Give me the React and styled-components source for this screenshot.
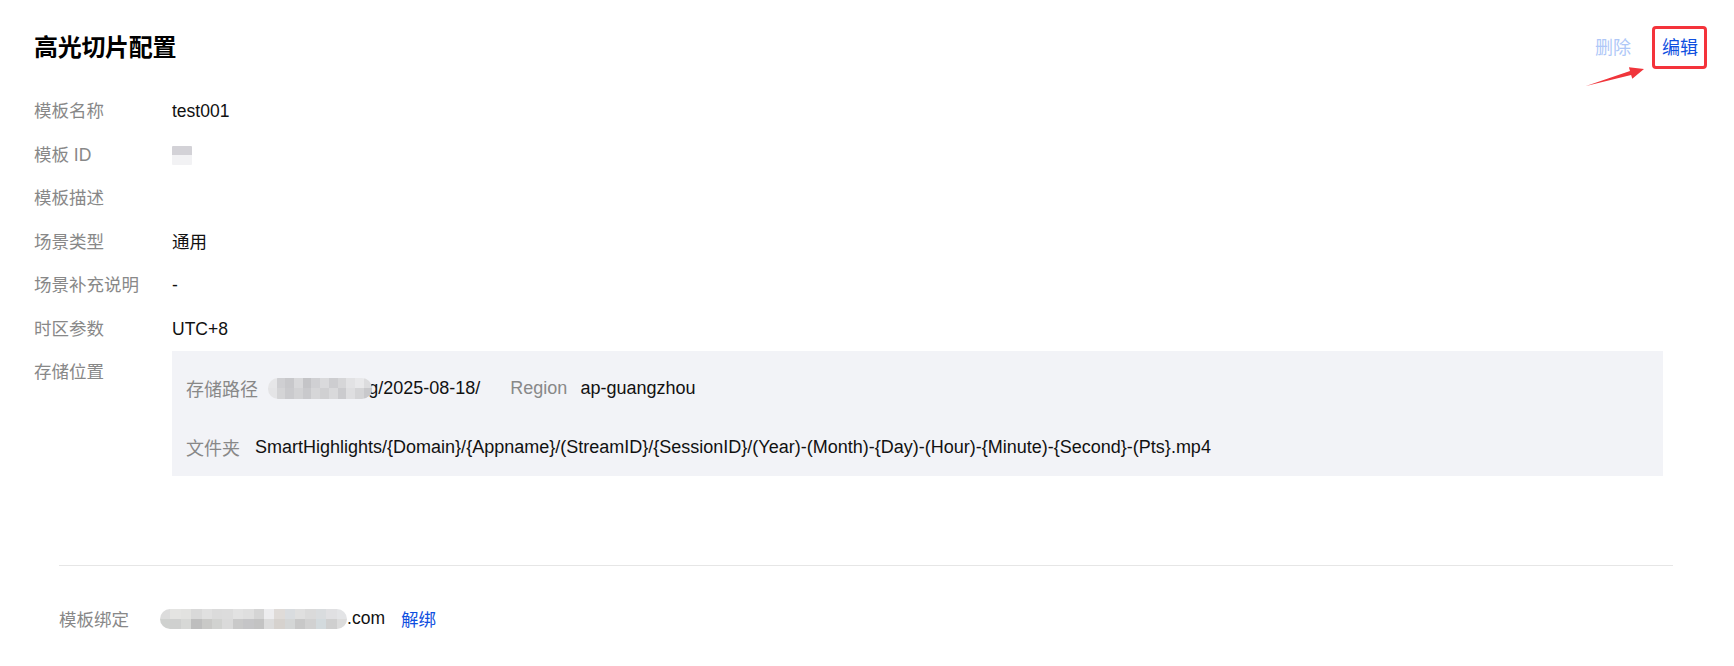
import React from "react";
import styled, { createGlobalStyle } from "styled-components";

const GlobalStyle = createGlobalStyle`
  html, body { margin: 0; padding: 0; background: #ffffff; }
  body {
    font-family: "Liberation Sans", Arial, "Noto Sans CJK SC", sans-serif;
    color: #1a1a1a;
  }
  * { box-sizing: border-box; }
`;

const Page = styled.div`
  padding: 0 36px 0 34px;
  position: relative;
`;

const Header = styled.div`
  display: flex;
  align-items: center;
  justify-content: space-between;
  height: 42px;
  margin-top: 27px;
  margin-bottom: 21px;
`;

const Title = styled.h1`
  margin: 0;
  font-size: 24px;
  line-height: 24px;
  font-weight: 700;
  color: #000;
  letter-spacing: -0.3px;
`;

const Actions = styled.div`
  display: flex;
  align-items: center;
  gap: 31px;
`;

const ActionButton = styled.span`
  position: relative;
  font-size: 18px;
  line-height: 24px;
  cursor: pointer;
  color: ${(p) => (p.$disabled ? "#afc8f8" : "#0f4fe0")};
  ${(p) =>
    p.$marked &&
    `
    &::after {
      content: "";
      position: absolute;
      left: -10px;
      right: -9px;
      top: -10px;
      bottom: -9px;
      border: 3px solid #f4333b;
      border-radius: 4px;
    }
  `}
`;

const ArrowMark = styled.svg`
  position: absolute;
  left: -83px;
  top: 24px;
  overflow: visible;
`;

const DescList = styled.div`
  display: flex;
  flex-direction: column;
`;

const DescRow = styled.div`
  display: grid;
  grid-template-columns: 138px 1fr;
  min-height: 43.5px;
  align-items: start;
`;

const Label = styled.div`
  font-size: 17.5px;
  line-height: 43.5px;
  color: #888888;
  white-space: nowrap;
`;

const Value = styled.div`
  font-size: 17.5px;
  line-height: 43.5px;
  color: #111;
  min-height: 43.5px;
  display: flex;
  align-items: center;
`;

const StorageBox = styled.div`
  background: #f2f3f7;
  margin-right: 35px;
  padding: 20px 14px 12px 14px;
  display: flex;
  flex-direction: column;
  gap: 25px;
`;

const StorageLine = styled.div`
  display: flex;
  align-items: center;
  height: 34px;
  gap: 30px;
  font-size: 18px;
  white-space: nowrap;
`;

const Field = styled.span`
  display: inline-flex;
  align-items: center;
`;

const FieldLabel = styled.span`
  color: #888888;
  margin-right: ${(p) => p.$gap || 14}px;
`;

const FieldValue = styled.span`
  color: #111;
  display: inline-flex;
  align-items: center;
`;

const Mosaic = styled.span`
  display: inline-grid;
  grid-template-columns: repeat(${(p) => p.$cols}, ${(p) => p.$cw}px);
  grid-auto-rows: ${(p) => p.$ch}px;
  border-radius: ${(p) => p.$r}px;
  overflow: hidden;
  flex: none;
  margin-right: ${(p) => p.$overlap || 0}px;
  position: relative;
  z-index: 1;
`;

const Cell = styled.span`
  background: ${(p) => p.$c};
`;

const Divider = styled.hr`
  border: none;
  height: 1px;
  background: #e6e6e6;
  margin: 89px 25px 0 25px;
`;

const BindRow = styled.div`
  display: grid;
  grid-template-columns: 101px auto;
  align-items: center;
  margin: 40px 25px 0 25px;
  height: 24px;
`;

const BindLabel = styled.span`
  font-size: 17.5px;
  color: #888888;
`;

const BindValue = styled.span`
  display: inline-flex;
  align-items: center;
  font-size: 17.5px;
  color: #111;
`;

const LinkText = styled.span`
  color: #0f4fe0;
  margin-left: 16px;
  cursor: pointer;
`;

function MosaicBlock({ cols, cw, ch, r, colors, overlap }) {
  return (
    <Mosaic $cols={cols} $cw={cw} $ch={ch} $r={r} $overlap={overlap}>
      {colors.map((c, i) => (
        <Cell key={i} $c={c} />
      ))}
    </Mosaic>
  );
}

const idColors = ["#d3d2d7", "#d3d2d7", "#f2f2f4", "#f2f2f4"];

const pathColors = [
  "#e6e6e8", "#cfcfd2", "#c8c8cb", "#d8d8da", "#c4c4c7", "#d0d0d3", "#dadadc", "#cdcdd0", "#d6d6d8", "#e2e2e4", "#e8e8ea", "#dcdcde",
  "#e4e4e6", "#d4d4d6", "#cacacd", "#d2d2d4", "#c9c9cc", "#d6d6d8", "#d0d0d2", "#d9d9db", "#cbcbce", "#dedee0", "#d4d4d6", "#c8c8cb",
];

const bindColors = [
  "#dcdcdc", "#e4e4e2", "#e2e2e0", "#d9d9d9", "#e0e0e0", "#dbdbdb", "#dcdcdc", "#e2e2e2", "#dfdfdf", "#d5d5d5", "#ededef", "#dfdbd8", "#d9dcdf", "#dfdfdf", "#dadada", "#d9dcde", "#e0e0e2", "#e3e4e6",
  "#cfd1cf", "#cfd0cf", "#d7d8d6", "#bebebe", "#c9c9c7", "#d1d2d0", "#dadada", "#c9c9c9", "#c5c5c7", "#c3c3c3", "#dcdcdc", "#d6d2ce", "#d4d6d6", "#c8c8c8", "#d1d1d1", "#d3dadd", "#cfcfcf", "#dcdcdc",
];

export default function App() {
  return (
    <>
      <GlobalStyle />
      <Page>
        <Header>
          <Title>高光切片配置</Title>
          <Actions>
            <ActionButton $disabled>删除</ActionButton>
            <ActionButton $marked>
              编辑
              <ArrowMark width="70" height="32" viewBox="0 0 70 32">
                <polygon
                  points="7,26 52.1,14.9 53.3,18.7 65,9 49.9,7.2 51,11"
                  fill="#f0353b"
                />
              </ArrowMark>
            </ActionButton>
          </Actions>
        </Header>

        <DescList>
          <DescRow>
            <Label>模板名称</Label>
            <Value>test001</Value>
          </DescRow>
          <DescRow>
            <Label>模板 ID</Label>
            <Value>
              <MosaicBlock cols={2} cw={10} ch={9.5} r={1} colors={idColors} />
            </Value>
          </DescRow>
          <DescRow>
            <Label>模板描述</Label>
            <Value />
          </DescRow>
          <DescRow>
            <Label>场景类型</Label>
            <Value>通用</Value>
          </DescRow>
          <DescRow>
            <Label>场景补充说明</Label>
            <Value>-</Value>
          </DescRow>
          <DescRow>
            <Label>时区参数</Label>
            <Value>UTC+8</Value>
          </DescRow>
          <DescRow>
            <Label>存储位置</Label>
            <StorageBox>
              <StorageLine>
                <Field>
                  <FieldLabel $gap={10}>存储路径</FieldLabel>
                  <FieldValue>
                    <MosaicBlock cols={12} cw={8.7} ch={10.5} r={10} colors={pathColors} overlap={-4} />
                    g/2025-08-18/
                  </FieldValue>
                </Field>
                <Field>
                  <FieldLabel $gap={13}>Region</FieldLabel>
                  <FieldValue>ap-guangzhou</FieldValue>
                </Field>
              </StorageLine>
              <StorageLine>
                <Field>
                  <FieldLabel $gap={15}>文件夹</FieldLabel>
                  <FieldValue>
                    SmartHighlights/{"{"}Domain{"}"}/{"{"}Appname{"}"}/(StreamID{"}"}/{"{"}SessionID{"}"}/(Year)-(Month)-{"{"}Day)-(Hour)-{"{"}Minute)-{"{"}Second{"}"}-(Pts{"}"}.mp4
                  </FieldValue>
                </Field>
              </StorageLine>
            </StorageBox>
          </DescRow>
        </DescList>

        <Divider />
        <BindRow>
          <BindLabel>模板绑定</BindLabel>
          <BindValue>
            <MosaicBlock cols={18} cw={10.4} ch={10} r={10} colors={bindColors} />
            .com
            <LinkText>解绑</LinkText>
          </BindValue>
        </BindRow>
      </Page>
    </>
  );
}
